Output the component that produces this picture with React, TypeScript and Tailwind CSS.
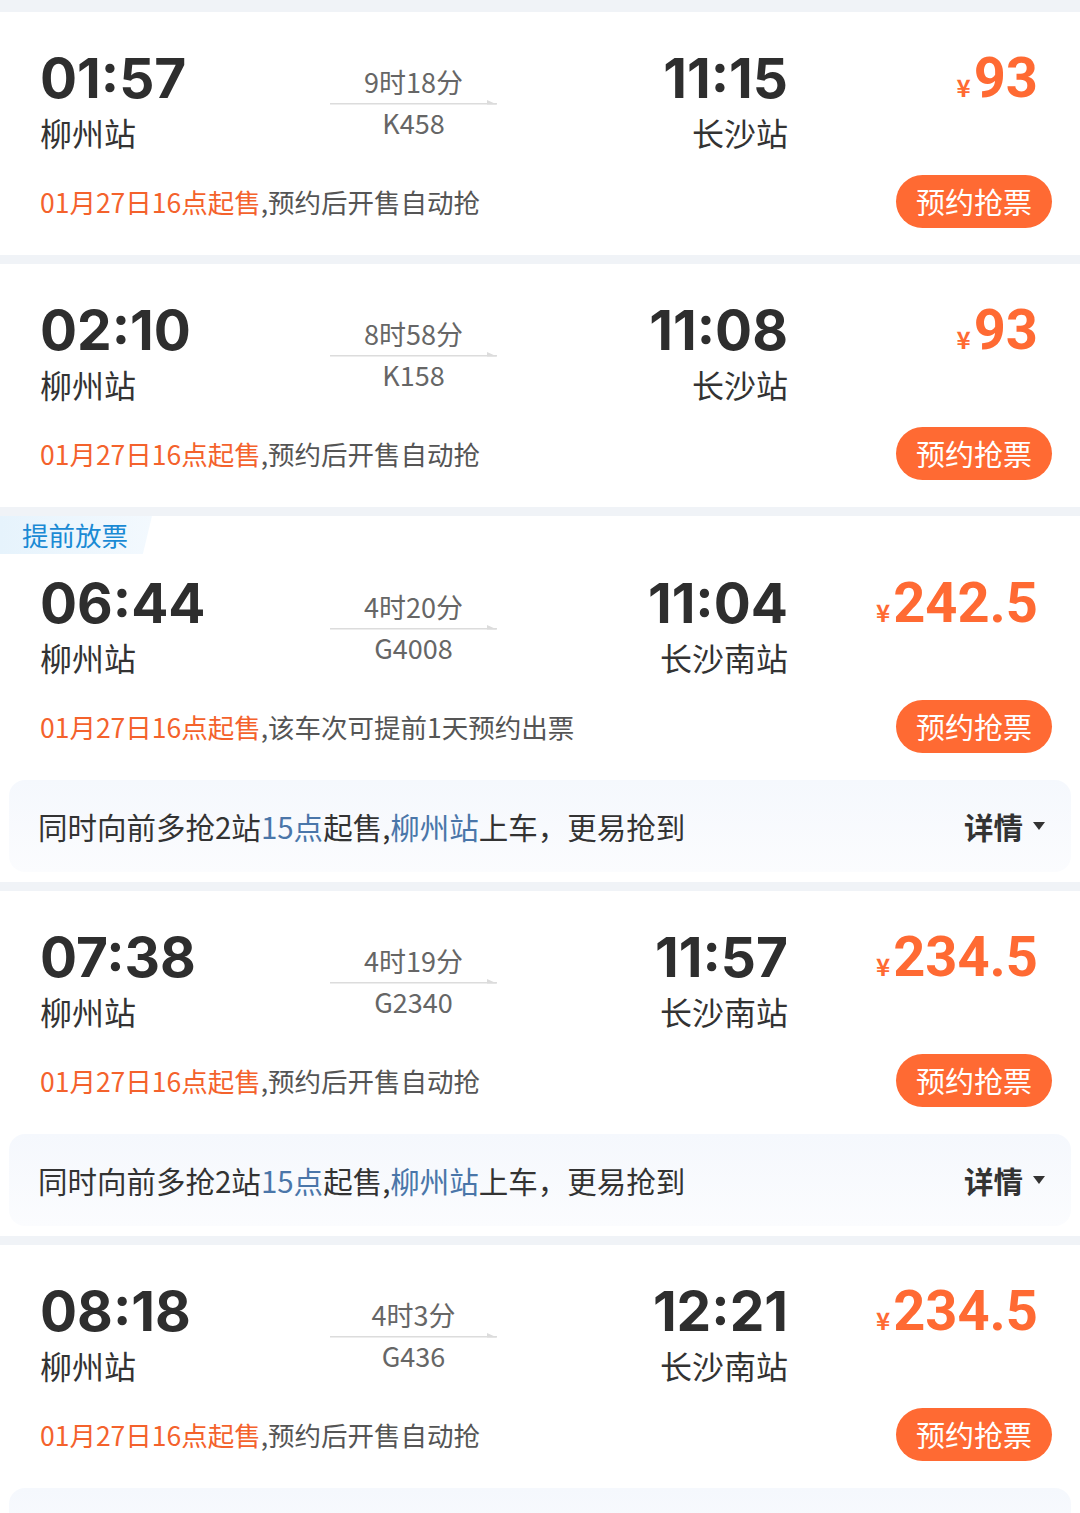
type Train = {
  dep: string;
  from: string;
  dur: string;
  no: string;
  arr: string;
  to: string;
  price: string;
  note: string;
  tag?: boolean;
  extra?: "full" | "empty";
};

const trains: Train[] = [
  { dep: "01:57", from: "柳州站", dur: "9时18分", no: "K458", arr: "11:15", to: "长沙站", price: "93", note: ",预约后开售自动抢" },
  { dep: "02:10", from: "柳州站", dur: "8时58分", no: "K158", arr: "11:08", to: "长沙站", price: "93", note: ",预约后开售自动抢" },
  { dep: "06:44", from: "柳州站", dur: "4时20分", no: "G4008", arr: "11:04", to: "长沙南站", price: "242.5", note: ",该车次可提前1天预约出票", tag: true, extra: "full" },
  { dep: "07:38", from: "柳州站", dur: "4时19分", no: "G2340", arr: "11:57", to: "长沙南站", price: "234.5", note: ",预约后开售自动抢", extra: "full" },
  { dep: "08:18", from: "柳州站", dur: "4时3分", no: "G436", arr: "12:21", to: "长沙南站", price: "234.5", note: ",预约后开售自动抢", extra: "empty" },
];

const Arrow = () => (
  <svg width="167" height="5" viewBox="0 0 167 5" className="block">
    <rect x="0" y="3" width="167" height="1.5" fill="#dcdcdc" />
    <polygon points="157,0 167,4.5 157,4.5" fill="#dcdcdc" />
  </svg>
);

const TrainCard = ({ t }: { t: Train }) => {
  return (
    <div className="bg-white">
      {t.tag && (
        <div className="h-[38px] w-[152px] flex items-center pl-[22px] text-[26.5px] text-[#1a8ad4] bg-gradient-to-r from-[#e6f3fc] to-[#f3f9fe] [clip-path:polygon(0_0,100%_0,94%_100%,0_100%)]">
          提前放票
        </div>
      )}
      <div className={t.tag ? "pt-[19px] pl-[40px] pr-[42px]" : "pt-[36px] pl-[40px] pr-[42px]"}>
        <div className="flex">
          <div className="w-[290px]">
            <div className="font-['Inter','Noto_Sans_CJK_SC',sans-serif] font-bold text-[55px] leading-[60px] text-[#2e2e2e]">{t.dep}</div>
            <div className="mt-[4px] text-[32px] leading-[40px] text-[#333]">{t.from}</div>
          </div>
          <div className="w-[167px] mt-[16px] flex flex-col items-center text-[#666]">
            <div className="text-[27px] leading-[36px]">{t.dur}</div>
            <Arrow />
            <div className="text-[27px] leading-[36px]">{t.no}</div>
          </div>
          <div className="flex-1 flex flex-col items-end">
            <div className="font-['Inter','Noto_Sans_CJK_SC',sans-serif] font-bold text-[55px] leading-[60px] text-[#2e2e2e]">{t.arr}</div>
            <div className="mt-[4px] text-[32px] leading-[40px] text-[#333]">{t.to}</div>
          </div>
          <div className="w-[250px] flex justify-end items-baseline text-[#ff6a33] h-[60px]">
            <span className="text-[24px] font-bold mr-[3px]">¥</span>
            <span className="font-['Roboto','Noto_Sans_CJK_SC',sans-serif] font-bold text-[56px] leading-[60px]">{t.price}</span>
          </div>
        </div>
        <div className="mt-[23px] flex items-center justify-between">
          <div className="text-[26.5px] text-[#555]">
            <span className="text-[#f4622c]">01月27日16点起售</span>
            {t.note}
          </div>
          <div className="mr-[-14px] h-[53px] w-[156px] rounded-full bg-[#ff6a33] text-white text-[29px] flex items-center justify-center">
            预约抢票
          </div>
        </div>
      </div>
      {t.extra === "full" && (
        <div className="mt-[27px] mx-[9px] mb-[10px] h-[92px] rounded-[16px] bg-gradient-to-b from-[#f5f8fd] to-[#fbfcfe] flex items-center justify-between pl-[29px] pr-[26px]">
          <div className="text-[29.5px] text-[#333]">
            同时向前多抢2站<span className="text-[#4a76a9]">15点</span>起售,<span className="text-[#4a76a9]">柳州站</span>上车，更易抢到
          </div>
          <div className="flex items-center gap-[10px] text-[29.5px] font-bold text-[#333]">
            详情
            <svg width="12" height="8" viewBox="0 0 12 8">
              <polygon points="0,0 12,0 6,8" fill="#333" />
            </svg>
          </div>
        </div>
      )}
      {t.extra === "empty" && (
        <div className="mt-[27px] mx-[9px] h-[92px] rounded-[16px] bg-gradient-to-b from-[#f5f8fd] to-[#fbfcfe]" />
      )}
      {!t.extra && <div className="h-[27px]" />}
    </div>
  );
};

export default function App() {
  return (
    <div className="h-[1513px] overflow-hidden bg-[#f0f3f7] pt-[12px] flex flex-col gap-[9px] font-['Noto_Sans_CJK_SC',sans-serif]">
      {trains.map((t, i) => (
        <TrainCard key={i} t={t} />
      ))}
    </div>
  );
}
